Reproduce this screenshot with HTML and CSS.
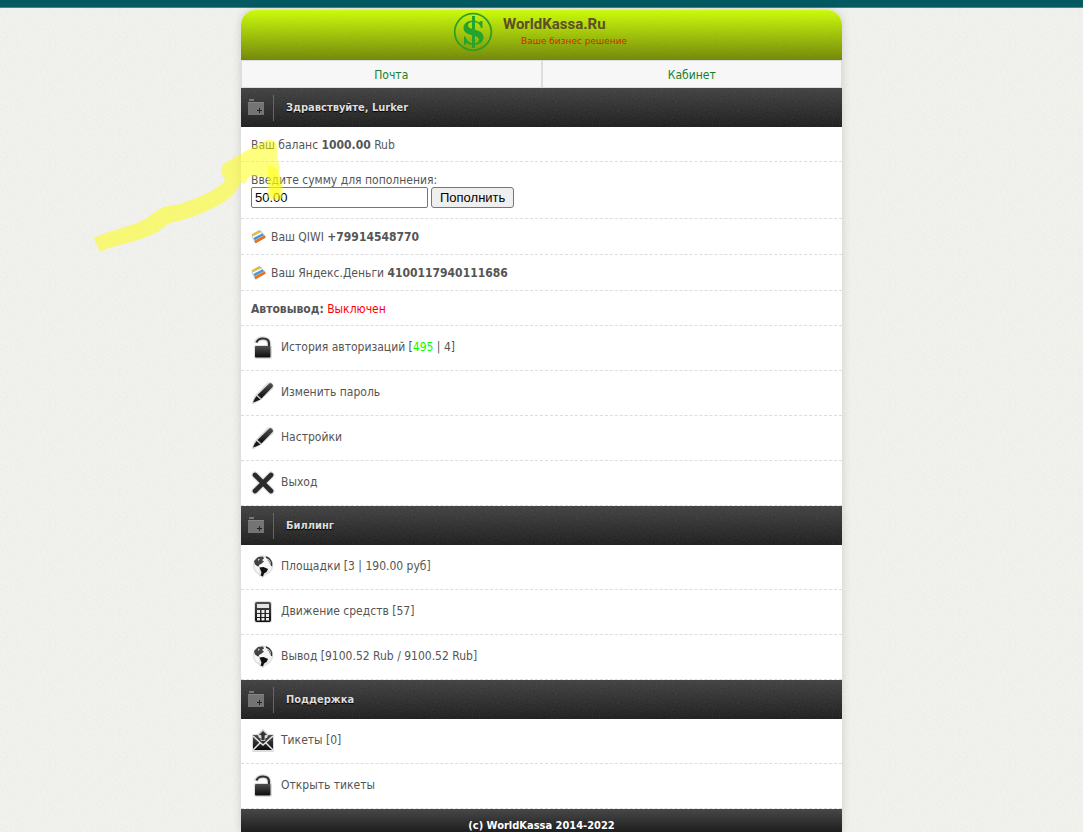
FILE: index.html
```html
<!DOCTYPE html>
<html lang="ru">
  <head>
    <meta charset="utf-8">
    <meta name="viewport" content="width=device-width, initial-scale=1">
    <title>WorldKassa.Ru</title>
    <link rel="stylesheet" href="styles.css">
  </head>
  <body>
    <svg width="0" height="0" class="sprite">
      <defs>
        <linearGradient id="dark" x1="0" y1="0" x2="0" y2="1">
          <stop offset="0" stop-color="#505050"/>
          <stop offset="1" stop-color="#0c0c0c"/>
        </linearGradient>
      </defs>
      <symbol id="folder" viewBox="0 0 16 17">
        <path d="M1 0h5v2H1z" fill="#777"/>
        <path d="M0 3h16v13H0z" fill="#747474"/>
        <path d="M0 3h16v1H0z" fill="#858585"/>
        <path d="M9 11.500h5M11.500 9v5" stroke="#222" fill="none"/>
      </symbol>
      <symbol id="lock" viewBox="0 0 24 24">
        <path d="M5 7C6 3.500 8.500 2.500 12 2.500c4 0 6 2.200 6 5v4" fill="none" stroke="#ddd" stroke-width="4.500"/>
        <rect x="3" y="9" width="18" height="14" rx="2" fill="#ddd"/>
        <path d="M5.500 6.500C6.500 3.500 8.500 2.500 12 2.500c3.800 0 6 2 6 5v4" fill="none" stroke="#303030" stroke-width="2.200"/>
        <rect x="4" y="10" width="15.500" height="11.500" rx="1" fill="url(#dark)"/>
      </symbol>
      <symbol id="pen" viewBox="0 0 24 24">
        <path d="M2 22l3-7L17 3c2-2 6 1 4 4L9 18z" fill="#ddd" stroke="#ddd" stroke-width="2.500" stroke-linejoin="round"/>
        <path d="M6.500 14L18 2.700c2-1.700 5 1.300 3.500 3.300L10.500 17.500z" fill="url(#dark)"/>
        <path d="M5.500 15l4 3.500L5 20.500l-3 1L3.500 18z" fill="#181818"/>
        <path d="M6 14.500l4 3.500" stroke="#aaa" stroke-width=".8"/>
      </symbol>
      <symbol id="cross" viewBox="0 0 24 24">
        <path d="M4 4l16 16M20 4L4 20" stroke="#ddd" stroke-width="7" stroke-linecap="round"/>
        <path d="M4 4l16 16M20 4L4 20" stroke="#2a2a2a" stroke-width="4.600" stroke-linecap="round"/>
      </symbol>
      <symbol id="globe" viewBox="0 0 24 24">
        <circle cx="12" cy="10.500" r="9.500" fill="#f6f6f6" stroke="#e0e0e0" stroke-width="1.500"/>
        <path d="M8 12l9 1 1 4-6 6-4-2z" fill="#e4e4e4"/>
        <path d="M3 6l4-4 5-.5 1 2-2 1.500 2 1.500-3 2.500-2 1-1 1.500-3-2z" fill="#444"/>
        <path d="M3.500 7l3 2 2 2.500-2-.5z" fill="#333"/>
        <path d="M8.500 12.500l4-.5 4.500 2-1.500 3-2.500 1.500-1 3-2.500-1 1-3z" fill="#111"/>
        <path d="M15 2c4 1.500 6.500 5 5.500 9" fill="none" stroke="#333" stroke-width="1.500"/>
        <path d="M16.500 5l2 1.500 1 3" fill="none" stroke="#777" stroke-width="1"/>
        <path d="M7 3.500l2 1-2 1.500z" fill="#ccc"/>
      </symbol>
      <symbol id="calc" viewBox="0 0 24 24">
        <rect x="3" y="1" width="18" height="22" rx="3" fill="#ddd"/>
        <rect x="4" y="2" width="16" height="20" rx="2" fill="url(#dark)"/>
        <path d="M6 4h12v4H6z" fill="#e4e4e4"/>
        <path d="M6 10h3v3H6zM10.500 10h3v3h-3zM15 10h3v3h-3zM6 14h3v3H6zM10.500 14h3v3h-3zM15 14h3v3h-3zM6 18h3v2.500H6zM10.500 18h3v2.500h-3zM15 18h3v2.500h-3z" fill="#eee"/>
      </symbol>
      <symbol id="mail" viewBox="0 0 24 24">
        <path d="M2 6h5l5-5 5 5h5v16H2z" fill="#ddd" stroke="#ddd" stroke-width="2" stroke-linejoin="round"/>
        <path d="M2 6h5l1 3h8l1-3h5v15H2z" fill="url(#dark)"/>
        <path d="M2 7l10 9L22 7M2 21l7-7M22 21l-7-7" fill="none" stroke="#e8e8e8" stroke-width="1.500"/>
        <path d="M12 1.500l5 5h-3v5h-4v-5H7z" fill="#333" stroke="#ddd" stroke-width=".8"/>
      </symbol>
      <symbol id="cards" viewBox="0 0 16 16">
        <path d="M1 6l8-4.500 2.500 2L3 8.500z" fill="#f0c814" stroke="#a8924a" stroke-width=".6"/>
        <path d="M1 8l10-5 4 6-10.500 5.500z" fill="#fff" stroke="#aaa" stroke-width=".6"/>
        <path d="M2.500 9.500l10-5 1.300 2.200-10 5.300z" fill="#4a97d2"/>
        <path d="M4 12.500l10.500-5.500.8 2L5 15z" fill="#f07418" stroke="#b05a1c" stroke-width=".5"/>
      </symbol>
    </svg>

    <div class="topbar"></div>

    <div class="page">
      <header class="header">
        <a href="#" class="brand">
          <svg class="logo" viewBox="0 0 40 40">
            <circle cx="20" cy="20" r="18.300" fill="none" stroke="#2f9f22" stroke-width="1.800"/>
            <path d="M29.500 9v7h-1.500c-1-4-4-6-8-6-3 0-5 1.500-5 3.500 0 5 15.500 3 15.500 11.500 0 5-4 8-10.500 8-3 0-5-1-6.500-2l-1.500 2h-1v-8.500h1.500c1 4 4 7 8 7 3.500 0 5.500-1.500 5.500-4 0-5-15.500-3-15.500-11.500 0-4.500 4-7.500 9.500-7.500 3 0 4.500 1 6 2l1.500-1.500z" fill="#24a42c"/>
            <path d="M19 4h3v32h-3z" fill="#24a42c"/>
          </svg>
          <span class="brand-text">
            <span class="brand-name">WorldKassa.Ru</span>
            <span class="brand-slogan">Ваше бизнес решение</span>
          </span>
        </a>
      </header>

      <nav class="tabs">
        <a href="#">Почта</a>
        <a href="#">Кабинет</a>
      </nav>

      <h2 class="title"><svg><use href="#folder"/></svg><span>Здравствуйте, Lurker</span></h2>
      <div class="row">Ваш баланс <b>1000.00</b> Rub</div>
      <form class="row pay">
        <label for="amount">Введите сумму для пополнения:</label>
        <div class="pay-line">
          <input type="text" id="amount" value="50.00">
          <button type="button">Пополнить</button>
        </div>
      </form>
      <div class="row wallet"><svg><use href="#cards"/></svg><span>Ваш QIWI <b>+79914548770</b></span></div>
      <div class="row wallet"><svg><use href="#cards"/></svg><span>Ваш Яндекс.Деньги <b>4100117940111686</b></span></div>
      <div class="row"><b>Автовывод:</b> <span class="off">Выключен</span></div>
      <a href="#" class="item"><svg><use href="#lock"/></svg><span>История авторизаций [<span class="ok">495</span> | 4]</span></a>
      <a href="#" class="item"><svg><use href="#pen"/></svg><span>Изменить пароль</span></a>
      <a href="#" class="item"><svg><use href="#pen"/></svg><span>Настройки</span></a>
      <a href="#" class="item"><svg><use href="#cross"/></svg><span>Выход</span></a>

      <h2 class="title"><svg><use href="#folder"/></svg><span>Биллинг</span></h2>
      <a href="#" class="item"><svg><use href="#globe"/></svg><span>Площадки [3 | 190.00 руб]</span></a>
      <a href="#" class="item"><svg><use href="#calc"/></svg><span>Движение средств [57]</span></a>
      <a href="#" class="item"><svg><use href="#globe"/></svg><span>Вывод [9100.52 Rub / 9100.52 Rub]</span></a>

      <h2 class="title"><svg><use href="#folder"/></svg><span>Поддержка</span></h2>
      <a href="#" class="item"><svg><use href="#mail"/></svg><span>Тикеты [0]</span></a>
      <a href="#" class="item"><svg><use href="#lock"/></svg><span>Открыть тикеты</span></a>

      <footer class="footer">(c) WorldKassa 2014-2022</footer>

      <!-- marker arrow pointing at the balance -->
      <svg class="marker" viewBox="0 0 660 420">
        <path d="M41 354C80 336 110 328 145 318C195 303 215 282 240 266C262 254 285 257 310 248C350 236 385 220 412 202C425 193 432 187 436 178C423 165 420 142 434 130C455 117 535 72 555 62C574 54 590 65 591 80L592 122C600 133 603 145 596 155L608 190V230C606 244 565 244 563 228L562 171L515 169C504 170 500 180 496 193L482 186C472 212 450 237 420 253C375 278 335 292 290 305C262 305 250 327 225 340C180 364 115 371 60 395Z"/>
        <path d="M562 136Q580 137 596 153Q583 166 562 170ZM565 168L590 160L600 185V225Q585 240 572 225V195Z" class="overlap"/>
      </svg>
    </div>
  </body>
</html>
```
FILE: styles.css
```css
* {
  margin: 0;
  padding: 0;
  box-sizing: border-box;
}

body {
  font-family: "DejaVu Sans Condensed", Tahoma, Verdana, sans-serif;
  font-size: 12px;
  line-height: 14px;
  color: #555;
  background: #f3f3f0 url("data:image/svg+xml,%3Csvg xmlns='http://www.w3.org/2000/svg' width='120' height='120'%3E%3Cfilter id='n'%3E%3CfeTurbulence type='fractalNoise' baseFrequency='.6' numOctaves='2' stitchTiles='stitch'/%3E%3CfeColorMatrix type='saturate' values='0'/%3E%3C/filter%3E%3Crect width='120' height='120' filter='url(%23n)' opacity='.13'/%3E%3C/svg%3E");
}

a {
  color: inherit;
  text-decoration: none;
}

.sprite {
  position: absolute;
}

.topbar {
  height: 8px;
  background: #045a60;
  border-bottom: 1px solid #46868b;
}

.page {
  position: relative;
  max-width: 601px;
  margin: 2px auto 0;
  background: #fff;
  border-radius: 15px 15px 0 0;
  box-shadow: 0 0 10px rgba(0, 0, 0, 0.15);
}

.header,
.title {
  background-image: url("data:image/svg+xml,%3Csvg xmlns='http://www.w3.org/2000/svg' width='120' height='60'%3E%3Cfilter id='n'%3E%3CfeTurbulence type='fractalNoise' baseFrequency='.7' numOctaves='2' stitchTiles='stitch'/%3E%3CfeColorMatrix type='saturate' values='0'/%3E%3C/filter%3E%3Crect width='120' height='60' filter='url(%23n)' opacity='.12'/%3E%3C/svg%3E"), var(--shade);
}

.header {
  --shade: linear-gradient(#ccff00, #6f8500);
  display: flex;
  justify-content: center;
  height: 50px;
  border-radius: 15px 15px 0 0;
}

.brand {
  display: flex;
  gap: 10px;
  padding: 2px 3px 0 0;
}

.logo {
  width: 40px;
  height: 40px;
}

.brand-text {
  display: flex;
  flex-direction: column;
  padding-top: 3px;
}

.brand-name {
  font: bold 15px/18px "Roboto", sans-serif;
  color: #5d4f26;
}

.brand-slogan {
  padding-left: 18px;
  font: 9px/16px "DejaVu Sans", sans-serif;
  color: #c92d00;
}

.tabs {
  display: flex;
}

.tabs a {
  flex: 1;
  padding: 7px 6px 5px;
  text-align: center;
  color: #16802c;
  background: #f7f7f7;
  border: 1px solid #ddd;
}

.title {
  --shade: linear-gradient(#3e3e3e, #191919);
  display: flex;
  align-items: center;
  height: 39px;
  padding-left: 7px;
  font-size: 11px;
  color: #ddd;
  text-shadow: 0 1px 1px #000;
}

.title svg {
  width: 16px;
  height: 17px;
  margin-right: 9px;
}

.title span {
  padding: 6px 12px;
  border-left: 1px solid #666;
}

.row {
  padding: 11px 10px 9px;
  border-bottom: 1px dashed #ddd;
}

.row.pay {
  padding-bottom: 10px;
}

.pay label {
  display: block;
}

.pay-line {
  display: flex;
  gap: 3px;
}

.pay input,
.pay button {
  height: 21px;
  font: 13px "Liberation Sans", Arial, sans-serif;
  color: #000;
  border: 1px solid #767676;
  border-radius: 2px;
}

.pay input {
  width: 177px;
  padding: 0 3px;
  background: #fff;
}

.pay button {
  padding: 0 8px;
  background: #efefef;
  border-radius: 3px;
}

.row.wallet {
  display: flex;
  align-items: center;
  gap: 5px;
  padding: 10px;
}

.wallet svg {
  width: 15px;
  height: 15px;
}

.off {
  color: #f00;
}

.ok {
  color: #0f0;
}

.item {
  display: flex;
  align-items: flex-start;
  gap: 6px;
  height: 45px;
  padding: 10px;
  border-bottom: 1px dashed #ddd;
}

.item svg {
  width: 24px;
  height: 24px;
}

.item > span {
  padding-top: 4px;
}

.footer {
  padding-top: 10px;
  font-size: 11px;
  font-weight: bold;
  text-align: center;
  color: #fff;
  background: linear-gradient(#484848, #1c1c1c);
}

.marker {
  position: absolute;
  top: 110px;
  left: -161px;
  width: 220px;
  height: 140px;
  fill: rgba(255, 255, 0, 0.5);
  pointer-events: none;
}

.marker .overlap {
  fill: rgba(255, 255, 0, 0.45);
}
```
